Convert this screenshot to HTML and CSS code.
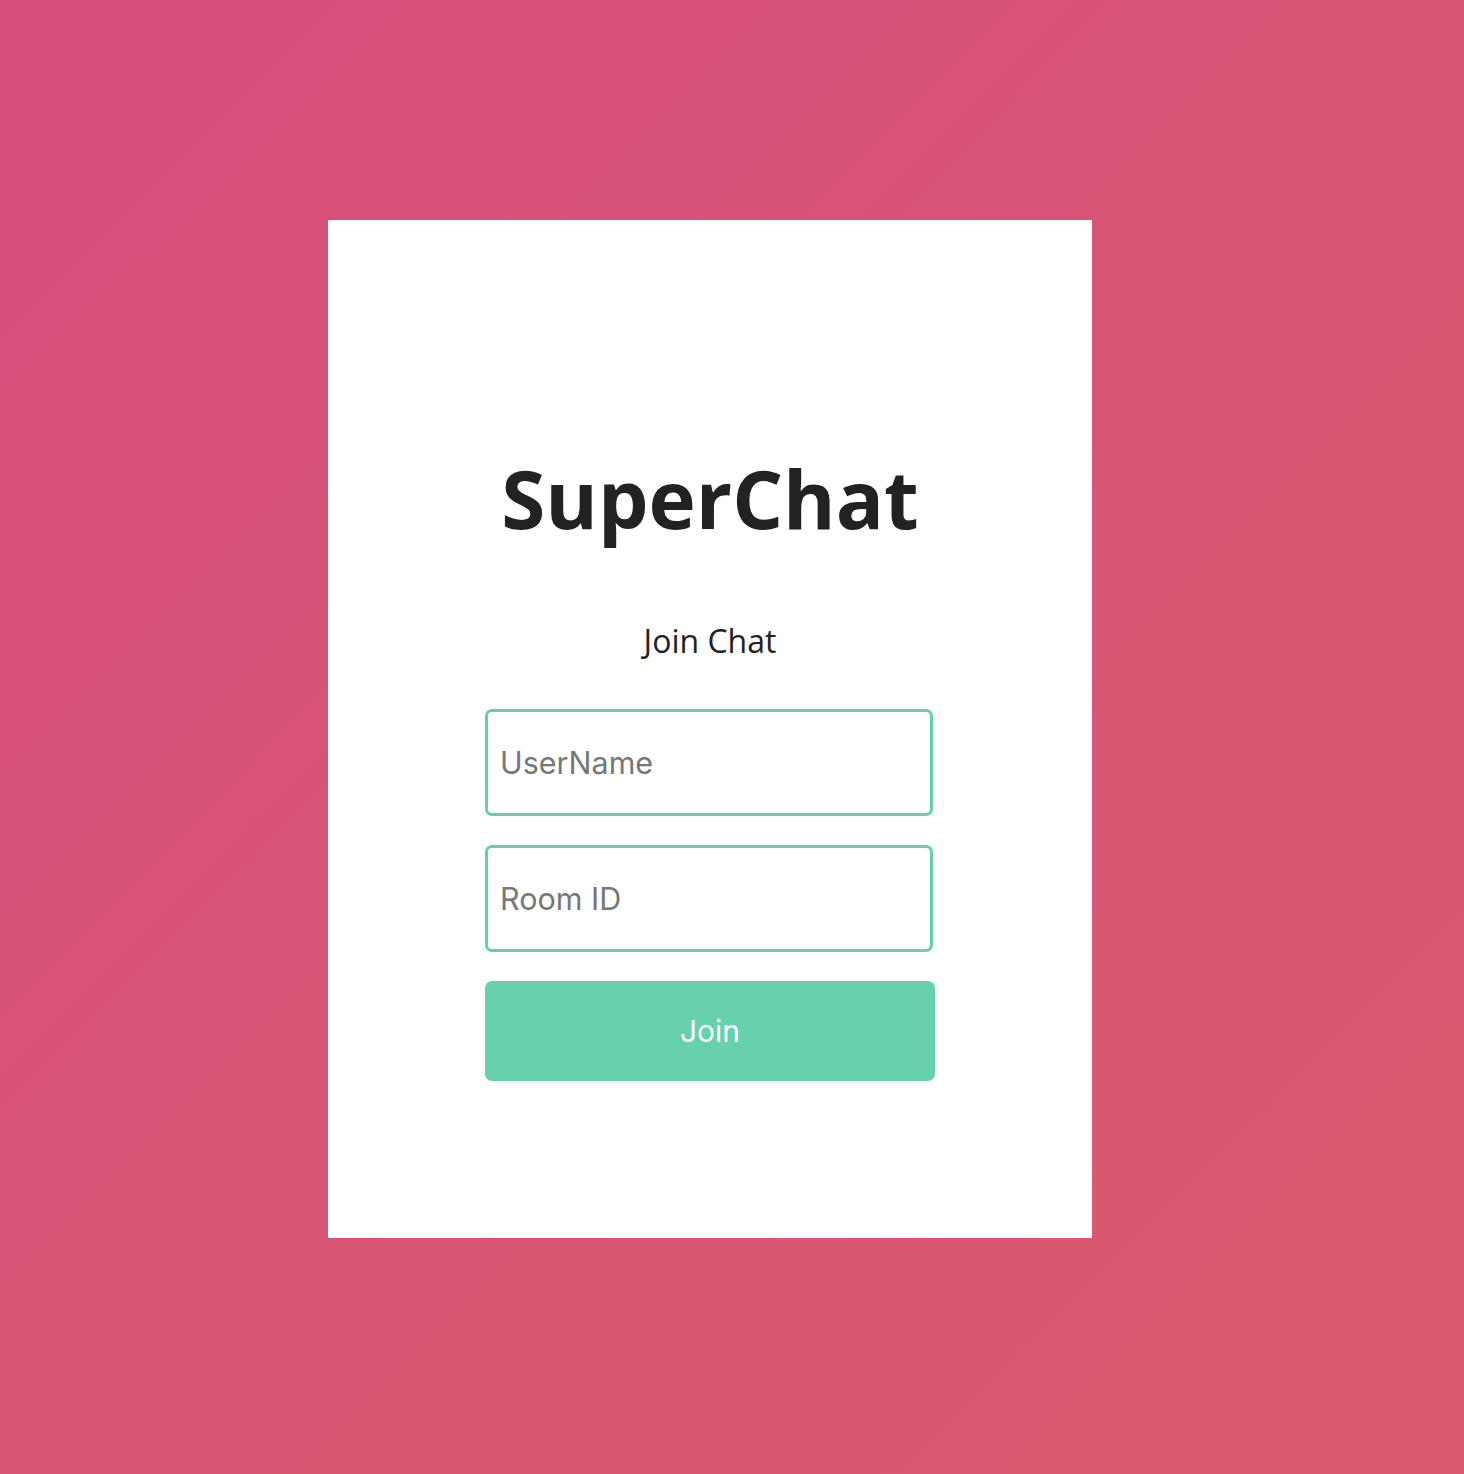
FILE: index.html
```html
<!DOCTYPE html>
<html>
<head>
<meta charset="utf-8">
<link rel="stylesheet" href="styles.css">
</head>
<body>
<div class="page">
  <div class="card">
    <h1 class="title">SuperChat</h1>
    <p class="subtitle">Join Chat</p>
    <form class="form">
      <input class="field" type="text" placeholder="UserName">
      <input class="field" type="text" placeholder="Room ID">
      <button class="join" type="button">Join</button>
    </form>
  </div>
</div>
</body>
</html>
```
FILE: styles.css
```css
html, body {
  margin: 0;
  padding: 0;
}
body {
  width: 1464px;
  height: 1474px;
  background: linear-gradient(135deg, #d64e7c 0%, #da5b6d 100%);
  font-family: "Open Sans", sans-serif;
}
.page {
  box-sizing: border-box;
  height: 1474px;
  padding: 220px 372px 236px 328px;
  display: flex;
}
.card {
  flex: 1;
  background: #fff;
  display: flex;
  flex-direction: column;
  align-items: center;
  padding-top: 238px;
  box-sizing: border-box;
}
.title {
  margin: 0;
  font-family: "Open Sans", sans-serif;
  font-weight: 700;
  font-size: 80px;
  line-height: 80px;
  color: #222;
  letter-spacing: 0;
}
.subtitle {
  margin: 81px 0 0;
  font-family: "Open Sans", sans-serif;
  font-size: 32px;
  line-height: 44px;
  color: #222;
}
.form {
  display: flex;
  flex-direction: column;
  width: 450px;
  gap: 29px;
  margin-top: 46px;
}
.field {
  box-sizing: border-box;
  width: 448px;
  height: 107px;
  border: 3px solid #63d0a9;
  border-radius: 7px;
  padding: 0 12px;
  font-family: Inter, "Liberation Sans", sans-serif;
  font-size: 30.5px;
  color: #333;
  outline: none;
  background: #fff;
}
.field::placeholder {
  color: #777;
}
.join {
  width: 450px;
  height: 100px;
  border: none;
  border-radius: 7px;
  background: #66d1ac;
  color: #fff;
  font-family: Inter, "Liberation Sans", sans-serif;
  font-size: 30px;
}
```
